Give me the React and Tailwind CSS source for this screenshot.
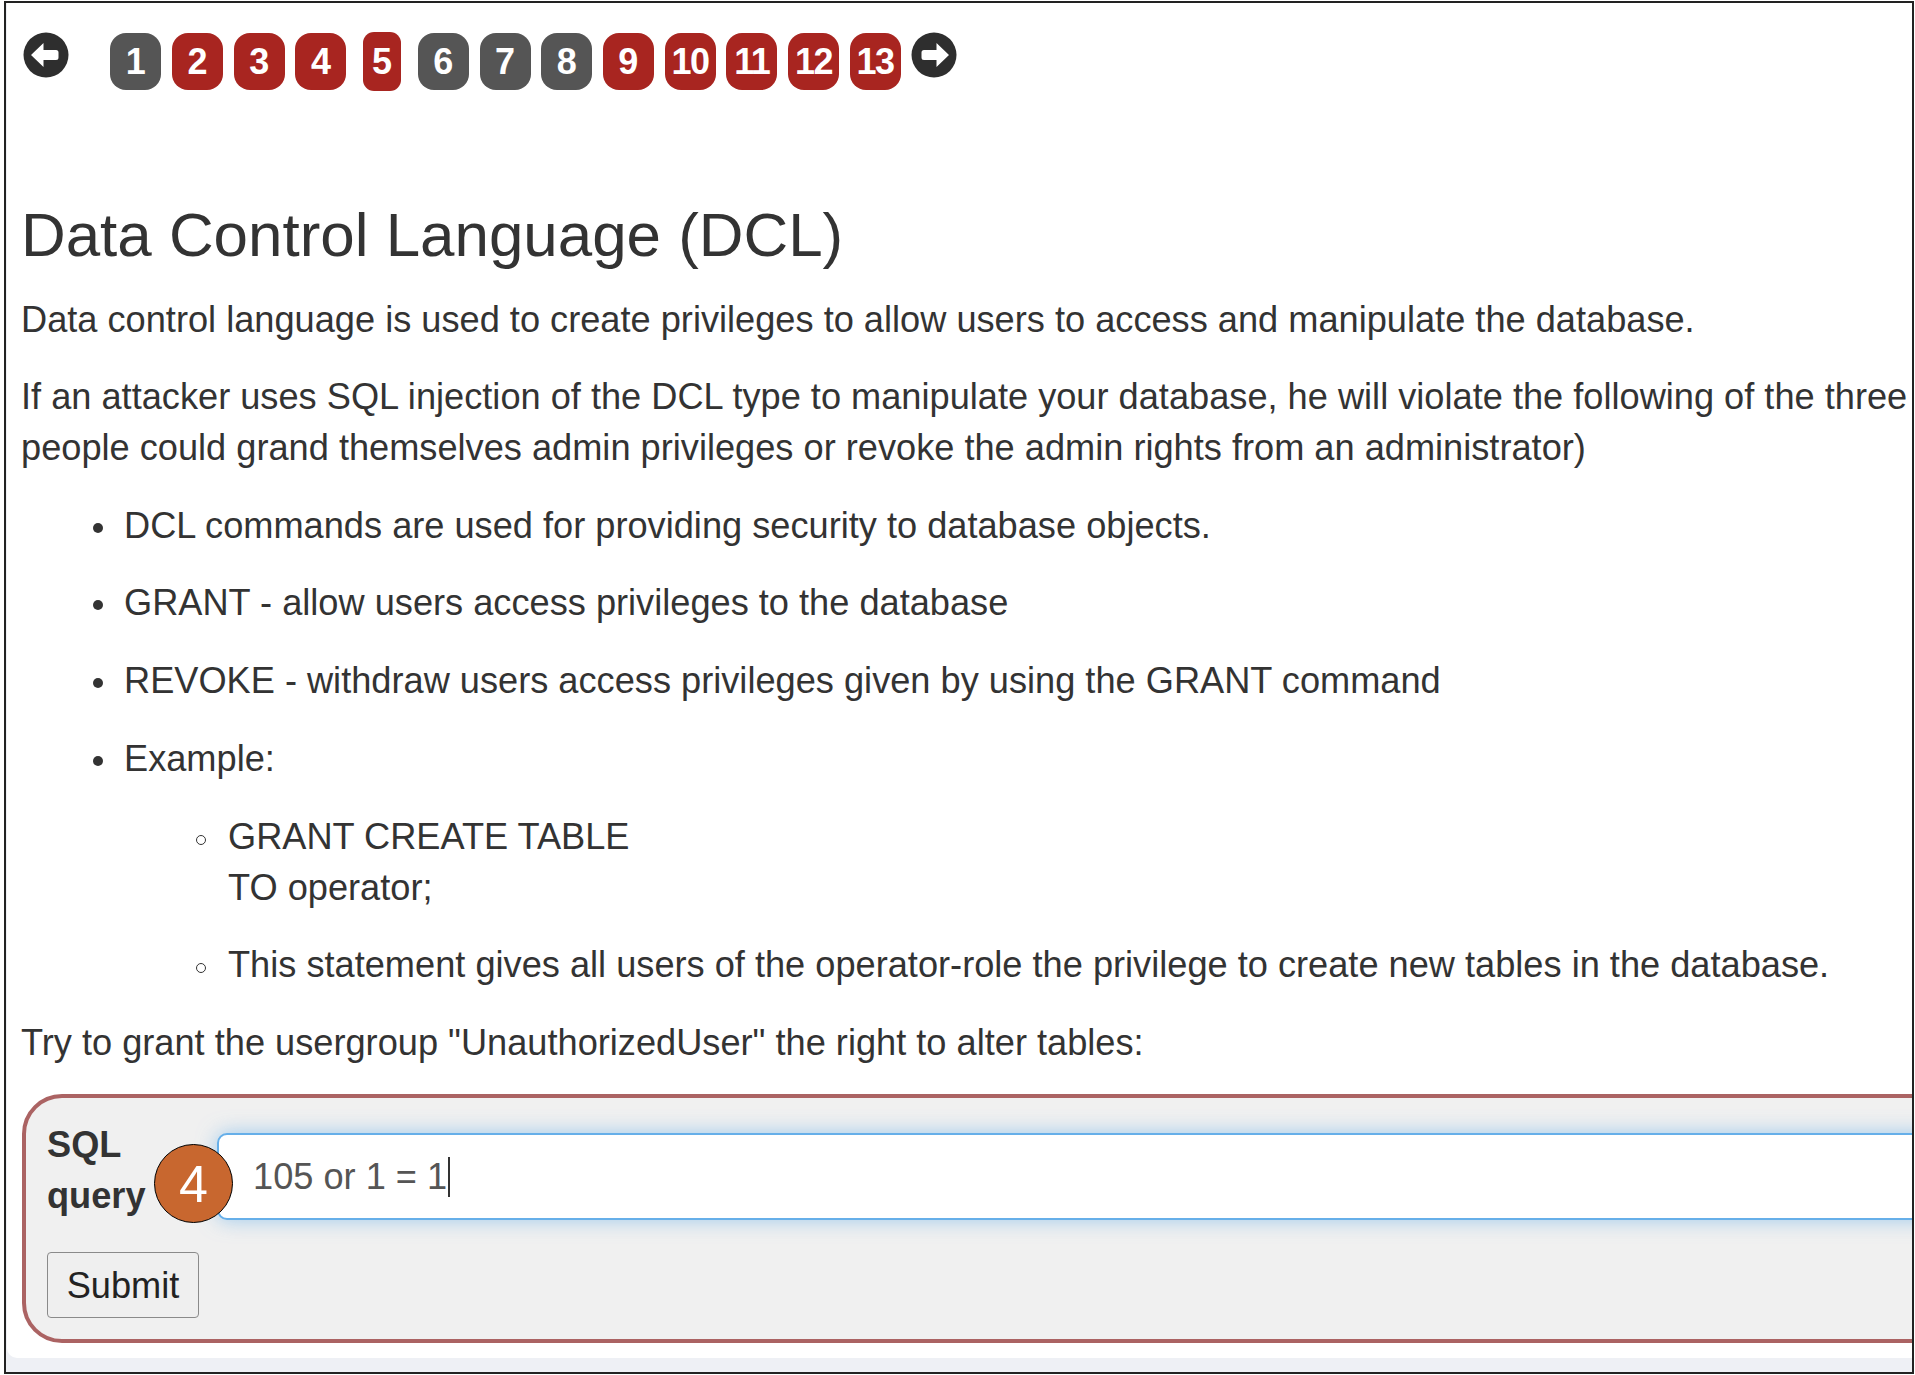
import React from 'react';

const pages = [
  { n: 1, tone: 'gray' },
  { n: 2, tone: 'red' },
  { n: 3, tone: 'red' },
  { n: 4, tone: 'red' },
  { n: 5, tone: 'red', current: true },
  { n: 6, tone: 'gray' },
  { n: 7, tone: 'gray' },
  { n: 8, tone: 'gray' },
  { n: 9, tone: 'red' },
  { n: 10, tone: 'red' },
  { n: 11, tone: 'red' },
  { n: 12, tone: 'red' },
  { n: 13, tone: 'red' },
];

// circled arrow, like the old font-awesome arrow-circle icons
const ArrowCircle = ({ dir }) => (
  <svg width="46" height="46" viewBox="0 0 46 46" className={dir === 'right' ? 'shrink-0 -scale-x-100' : 'shrink-0'}>
    <circle cx="23" cy="23" r="22.5" fill="#2e2e2e" />
    <path
      d="M8 23 L20.5 11 L20.5 18 L33 18 Q35.5 18 35.5 20.5 L35.5 25.5 Q35.5 28 33 28 L20.5 28 L20.5 35 Z"
      fill="#ffffff"
      strokeLinejoin="round"
    />
  </svg>
);

const PageButton = ({ n, tone, current }) => {
  const bg = tone === 'red' ? 'bg-[#a82520]' : 'bg-[#555555]';
  if (current) {
    return (
      <div className={`${bg} mx-[6px] flex h-[59px] w-[38px] shrink-0 items-center justify-center rounded-[11px] text-[36px] font-bold text-white`}>
        {n}
      </div>
    );
  }
  return (
    <div className={`${bg} mt-[1px] flex h-[57px] w-[51px] shrink-0 items-center justify-center rounded-[16px] text-[36px] font-bold text-white ${n > 9 ? 'tracking-[-1.5px]' : ''}`}>
      {n}
    </div>
  );
};

const Bullet = ({ children }) => (
  <li className="flex items-start">
    <span className="ml-[72px] mr-[21px] mt-[23px] h-[10px] w-[10px] shrink-0 rounded-full bg-[#333333]" />
    <div>{children}</div>
  </li>
);

const SubBullet = ({ children }) => (
  <li className="flex items-start">
    <span className="ml-[175px] mr-[22px] mt-[24px] h-[10px] w-[10px] shrink-0 rounded-full border-[1.5px] border-[#333333]" />
    <div>{children}</div>
  </li>
);

export default function App() {
  return (
    <div
      className="relative h-[1375px] w-[1915px] overflow-hidden bg-white text-[#333333]"
      style={{ fontFamily: '"Liberation Sans", Arial, sans-serif' }}
    >
      <div className="ml-[4px] mt-[1px] h-[1373px] w-[1910px] overflow-hidden border-2 border-[#222222] bg-[#eef0f5]">
        <div className="ml-[1px] h-[1355px] w-[1960px] rounded-bl-[10px] bg-white">
          {/* lesson page navigation */}
          <div className="flex items-start gap-[10.7px] pl-[16px] pt-[29px]">
            <ArrowCircle dir="left" />
            <div className="w-[20px] shrink-0" />
            {pages.map((p) => (
              <PageButton key={p.n} {...p} />
            ))}
            <ArrowCircle dir="right" />
          </div>

          <div className="pl-[14px] text-[36.2px] leading-[51px]">
            <h2 className="mb-[26px] mt-[110px] text-[61.9px] font-normal leading-[67px]">Data Control Language (DCL)</h2>

            <p className="mb-[26.3px] whitespace-nowrap">
              Data control language is used to create privileges to allow users to access and manipulate the database.
            </p>

            <p className="mb-[26.5px] whitespace-nowrap">
              If an attacker uses SQL injection of the DCL type to manipulate your database, he will violate the following of the three
              <br />
              people could grand themselves admin privileges or revoke the admin rights from an administrator)
            </p>

            <ul className="mb-[26.7px] flex flex-col gap-[26.7px]">
              <Bullet>DCL commands are used for providing security to database objects.</Bullet>
              <Bullet>GRANT - allow users access privileges to the database</Bullet>
              <Bullet>REVOKE - withdraw users access privileges given by using the GRANT command</Bullet>
              <li className="flex flex-col">
                <div className="flex items-start">
                  <span className="ml-[72px] mr-[21px] mt-[23px] h-[10px] w-[10px] shrink-0 rounded-full bg-[#333333]" />
                  <div>Example:</div>
                </div>
                <ul className="mt-[26.7px] flex flex-col gap-[26.7px]">
                  <SubBullet>
                    GRANT CREATE TABLE
                    <br />
                    TO operator;
                  </SubBullet>
                  <SubBullet>
                    This statement gives all users of the operator-role the privilege to create new tables in the database.
                  </SubBullet>
                </ul>
              </li>
            </ul>

            <p className="mb-[26.5px]">Try to grant the usergroup "UnauthorizedUser" the right to alter tables:</p>

            {/* attack form */}
            <div className="ml-[1px] w-[1960px] rounded-[40px] border-4 border-[#ab6363] bg-[#f0f0f0] px-[21px] pb-[21px] pt-[21px]">
              <div className="relative flex items-start">
                <label className="w-[170px] shrink-0 font-bold">
                  SQL
                  <br />
                  query
                </label>
                <div className="mt-[14px] flex h-[87px] flex-1 items-center rounded-[10px] border-2 border-[#66afe9] bg-white pl-[34px] text-[#555555] shadow-[0_0_20px_rgba(102,175,233,0.6)]">
                  <span>105 or 1 = 1</span>
                  <span className="ml-[1px] h-[40px] w-[1.5px] bg-[#333333]" />
                </div>
                <div className="absolute left-[107px] top-[25px] flex h-[79px] w-[79px] items-center justify-center rounded-full border border-black bg-[#c8672f] text-[52px] leading-none text-white">
                  4
                </div>
              </div>
              <button className="mt-[31px] h-[66px] w-[152px] rounded-[4px] border-[1.5px] border-[#8a8a8a] bg-[#efefef] text-[36.2px] text-[#222222]">
                Submit
              </button>
            </div>
          </div>
        </div>
      </div>
    </div>
  );
}
